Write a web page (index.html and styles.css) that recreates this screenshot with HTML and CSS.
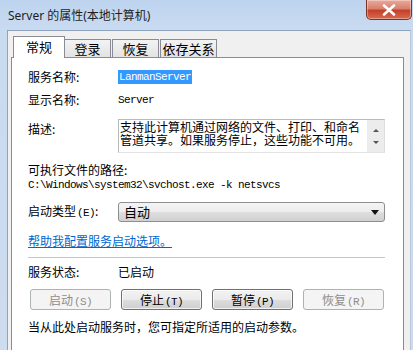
FILE: index.html
```html
<!DOCTYPE html>
<html lang="zh-CN">
<head>
<meta charset="utf-8">
<link rel="stylesheet" href="styles.css">
</head>
<body>
<div class="window">
  <div class="titlebar">
    <div class="title">Server 的属性(本地计算机)</div>
    <div class="close">
      <svg width="14" height="12" viewBox="0 0 14 12"><path d="M2 1.5 L12 10.5 M12 1.5 L2 10.5" stroke="#fff" stroke-width="2.6" stroke-linecap="round"/></svg>
    </div>
  </div>
  <div class="frame">
    <div class="body">
      <div class="tabs">
        <div class="tab active t1">常规</div>
        <div class="tab t2">登录</div>
        <div class="tab t3">恢复</div>
        <div class="tab t4">依存关系</div>
      </div>
      <div class="panel">
        <div class="row r1">
          <div class="label">服务名称:</div>
          <div class="mono"><span class="sel">LanmanServer</span></div>
        </div>
        <div class="row r2">
          <div class="label">显示名称:</div>
          <div class="mono">Server</div>
        </div>
        <div class="row r3">
          <div class="label lbl-desc">描述:</div>
          <div class="descbox">
            <div class="desc-text">支持此计算机通过网络的文件、打印、和命名管道共享。如果服务停止，这些功能不可用。</div>
            <div class="scroll"><span class="up"></span><span class="down"></span></div>
          </div>
        </div>
        <div class="plain r4">可执行文件的路径:</div>
        <div class="mono path">C:\Windows\system32\svchost.exe -k netsvcs</div>
        <div class="row r6">
          <div class="label">启动类型<span class="key">(E)</span>:</div>
          <div class="select"><span>自动</span><i class="arrow"></i></div>
        </div>
        <div class="link">帮助我配置服务启动选项。</div>
        <div class="sep"></div>
        <div class="row r8">
          <div class="label">服务状态:</div>
          <div>已启动</div>
        </div>
        <div class="buttons">
          <div class="btn disabled">启动<span class="key">(S)</span></div>
          <div class="btn">停止<span class="key">(T)</span></div>
          <div class="btn">暂停<span class="key">(P)</span></div>
          <div class="btn disabled">恢复<span class="key">(R)</span></div>
        </div>
        <div class="plain note">当从此处启动服务时，您可指定所适用的启动参数。</div>
      </div>
    </div>
  </div>
</div>
</body>
</html>
```

FILE: styles.css
```css
* { box-sizing: border-box; }
html, body { margin: 0; padding: 0; }
body {
  width: 413px;
  height: 350px;
  overflow: hidden;
  font-family: "Noto Sans CJK SC", "Noto Sans", sans-serif;
  font-size: 12px;
  color: #000;
}
.window {
  width: 413px;
  height: 350px;
  display: flex;
  flex-direction: column;
  background: linear-gradient(to bottom, #bdd3ee 0px, #c9dbf1 30px, #cddcee 350px);
}
.titlebar {
  height: 30px;
  display: flex;
  justify-content: space-between;
  align-items: flex-start;
  padding-left: 8px;
  flex: none;
}
.title {
  font-family: "Noto Sans", "Noto Sans CJK SC", sans-serif;
  font-size: 12px;
  line-height: 31px;
  color: #1e1e1e;
}
.close {
  width: 46px;
  height: 20px;
  margin-right: 1px;
  border: 1px solid #7a3328;
  border-top: none;
  border-radius: 0 0 5px 5px;
  background: linear-gradient(to bottom, #e9a99b 0%, #d9816e 45%, #c2422c 55%, #d86a4f 100%);
  display: flex;
  align-items: center;
  justify-content: center;
  box-shadow: inset 0 0 0 1px rgba(255,255,255,0.35);
}
.frame {
  flex: 1;
  display: flex;
  padding: 0 2px 0 7px;
}
.body {
  flex: 1;
  display: flex;
  flex-direction: column;
  background: #f0f0f0;
  border-top: 1px solid #8fa3bd;
  border-left: 1px solid #8fa3bd;
  border-right: 1px solid #b8c6d8;
  padding: 5px 6px 0 3px;
}
.tabs {
  display: flex;
  align-items: flex-end;
  height: 21px;
  margin-left: 2px;
  position: relative;
  z-index: 1;
}
.tab {
  height: 18px;
  border: 1px solid #898c95;
  border-bottom: none;
  background: linear-gradient(to bottom, #f3f3f3, #e3e3e3);
  font-size: 13px;
  line-height: 17px;
  text-align: center;
  margin-left: -1px;
}
.tab.active {
  height: 22px;
  margin-bottom: -1px;
  background: #fff;
  line-height: 20px;
  z-index: 2;
  margin-left: 0;
}
.t1 { width: 52px; }
.t2 { width: 47px; }
.t3 { width: 47px; margin-left: 1px; }
.t4 { width: 57px; margin-left: 1px; }
.panel {
  flex: 1;
  background: #fff;
  border: 1px solid #898c95;
  border-bottom: none;
  padding: 11px 18px 0 16px;
}
.row { display: flex; align-items: flex-start; }
.label { width: 90px; flex: none; line-height: 16px; }
.row > div { line-height: 16px; }
.mono {
  font-family: "Liberation Mono", monospace;
  font-size: 11px;
  letter-spacing: -0.6px;
  line-height: 16px;
}
.key {
  font-family: "Liberation Mono", monospace;
  font-size: 11px;
  letter-spacing: -0.6px;
  margin-left: 1px;
}
.sel {
  background: #3399ff;
  color: #fff;
  padding: 1px 1px 1px 1px;
}
.r2 { margin-top: 7px; }
.r3 { margin-top: 11px; }
.lbl-desc { padding-top: 2px; }
.descbox {
  width: 267px;
  height: 34px;
  border: 1px solid #b9b9b9;
  border-right-color: #dcdcdc;
  border-bottom-color: #e3e3e3;
  display: flex;
}
.row > .descbox { line-height: 13px; }
.desc-text {
  flex: 1;
  padding: 0 2px 0 1px;
  line-height: 13px;
  font-size: 12px;
  word-break: break-all;
}
.scroll {
  width: 17px;
  flex: none;
  background: #ececec;
  display: flex;
  flex-direction: column;
  justify-content: space-between;
  align-items: center;
  padding: 9px 0 8px;
}
.up, .down { width: 0; height: 0; border-left: 3px solid transparent; border-right: 3px solid transparent; }
.up { border-bottom: 3px solid #555; }
.down { border-top: 3px solid #555; }
.plain { line-height: 16px; }
.r4 { margin-top: 9px; }
.path { line-height: 14px; }
.r6 { margin-top: 9px; align-items: center; }
.r6 .label { line-height: 20px; }
.select {
  width: 267px;
  height: 20px;
  border: 1px solid #8e8f8f;
  border-radius: 3px;
  background: linear-gradient(to bottom, #f4f4f4 0%, #ececec 50%, #dedede 51%, #d0d0d0 100%);
  display: flex;
  align-items: center;
  justify-content: space-between;
  padding: 0 5px 0 5px;
  font-size: 13px;
}
.row > .select { line-height: 18px; }
.arrow {
  width: 0; height: 0;
  border-left: 4px solid transparent;
  border-right: 4px solid transparent;
  border-top: 5px solid #111;
}
.link {
  margin-top: 10px;
  line-height: 16px;
  color: #0066cc;
  text-decoration: underline;
}
.sep {
  margin-top: 8px;
  height: 1px;
  background: #c6c6c6;
  width: 357px;
}
.r8 { margin-top: 6px; }
.buttons {
  display: flex;
  gap: 10px;
  margin-top: 9px;
  margin-left: 2px;
}
.btn {
  width: 81px;
  height: 21px;
  border: 1px solid #707070;
  border-radius: 3px;
  background: linear-gradient(to bottom, #f2f2f2 0%, #ebebeb 50%, #dddddd 51%, #cfcfcf 100%);
  text-align: center;
  line-height: 19px;
  box-shadow: inset 0 0 0 1px rgba(255,255,255,0.7);
}
.btn.disabled {
  border-color: #adb2b5;
  background: #f4f4f4;
  color: #8d8d8d;
  box-shadow: none;
}
.note { margin-top: 9px; }
```
